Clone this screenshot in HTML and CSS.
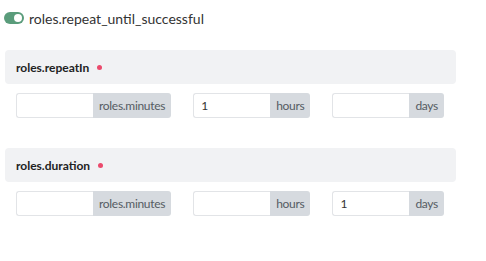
FILE: index.html
```html
<!DOCTYPE html>
<html lang="en">
    <head>
        <meta charset="UTF-8">
        <title>Repeat settings</title>
        <link rel="stylesheet" href="styles.css">
    </head>
    <body>
        <div class="settings">
            <label class="switch-row">
                <span class="switch"><span class="knob"></span></span>
                <span>roles.repeat_until_successful</span>
            </label>

            <div class="section">
                <div class="section-head">roles.repeatIn <span class="required"></span></div>
                <div class="fields">
                    <div class="input-group">
                        <input type="text" value="">
                        <span class="addon">roles.minutes</span>
                    </div>
                    <div class="input-group">
                        <input type="text" value="1">
                        <span class="addon">hours</span>
                    </div>
                    <div class="input-group">
                        <input type="text" value="">
                        <span class="addon">days</span>
                    </div>
                </div>
            </div>

            <div class="section">
                <div class="section-head">roles.duration <span class="required"></span></div>
                <div class="fields">
                    <div class="input-group">
                        <input type="text" value="">
                        <span class="addon">roles.minutes</span>
                    </div>
                    <div class="input-group">
                        <input type="text" value="">
                        <span class="addon">hours</span>
                    </div>
                    <div class="input-group">
                        <input type="text" value="1">
                        <span class="addon">days</span>
                    </div>
                </div>
            </div>
        </div>
    </body>
</html>
```

FILE: styles.css
```css
body {
    margin: 0;
    font-family: Lato, 'Liberation Sans', sans-serif;
    color: #222;
    background: #fff;
}

.settings {
    width: 451px;
    padding: 10px 0 0 5px;
}

.switch-row {
    display: flex;
    align-items: center;
    gap: 5px;
    margin-left: -1px;
    font-size: 14px;
    color: #333;
    height: 16px;
}

.switch {
    width: 20px;
    height: 12px;
    border-radius: 6px;
    background: #5a9c7b;
    position: relative;
}

.knob {
    position: absolute;
    right: 2px;
    top: 2px;
    width: 8px;
    height: 8px;
    border-radius: 50%;
    background: #fff;
}

.section {
    margin-top: 24px;
}

.section + .section {
    margin-top: 30px;
}

.section-head {
    height: 34px;
    display: flex;
    align-items: center;
    padding: 0 11px;
    background: #f1f2f4;
    border-radius: 4px;
    font-size: 12px;
    font-weight: 700;
    color: #222;
}

.required {
    width: 5px;
    height: 5px;
    border-radius: 50%;
    background: #eb4a6c;
    margin-left: 8px;
}

.fields {
    display: flex;
    gap: 22px;
    padding: 9px 11px 0;
}

.input-group {
    display: flex;
    height: 25px;
}

.input-group input {
    width: 77px;
    box-sizing: border-box;
    height: 25px;
    border: 1px solid #e2e4e7;
    border-right: none;
    border-radius: 3px 0 0 3px;
    padding: 0 7px;
    font-family: inherit;
    font-size: 12px;
    color: #333;
    outline: none;
}

.addon {
    display: flex;
    align-items: center;
    padding: 0 6px;
    background: #d6dadf;
    border-radius: 0 3px 3px 0;
    font-size: 12px;
    letter-spacing: -0.3px;
    color: #555c63;
}
```
